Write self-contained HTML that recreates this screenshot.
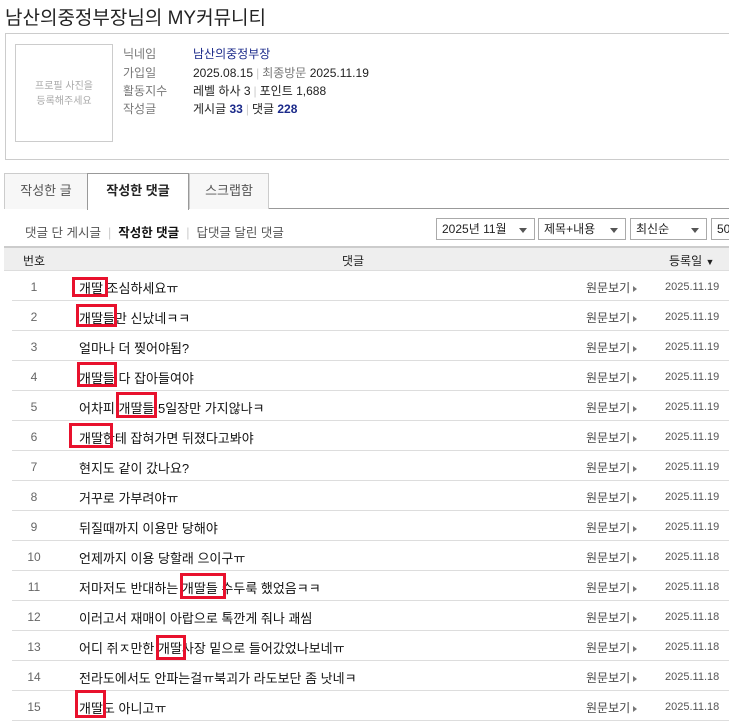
<!DOCTYPE html>
<html><head><meta charset="utf-8"><style>
*{margin:0;padding:0;box-sizing:border-box}
body{width:729px;height:720px;overflow:hidden;background:#fff;font-family:"Liberation Sans","Noto Sans CJK KR",sans-serif;font-size:12px;color:#222;position:relative}
.a{position:absolute;white-space:nowrap}
.title{left:5px;top:3px;font-size:19px;color:#222}
.prof{left:5px;top:33px;width:740px;height:127px;border:1px solid #ccc}
.photo{left:15px;top:44px;width:98px;height:98px;border:1px solid #ccc;color:#aaa;font-size:10px;text-align:center;line-height:15px;padding-top:34px}
.lab{color:#777;left:123px}
.val{left:193px;color:#222}
.sep{color:#ccc;margin:0 3px}
.b{color:#1b2a8a;font-weight:bold}
.tab{top:173px;height:36px;border:1px solid #ccc;border-bottom:none;background:#f7f7f7;color:#555;font-size:13px;text-align:center;line-height:34px}
.sel{top:218px;height:22px;border:1px solid #aaa;padding-left:5px;line-height:20px;font-size:12px;color:#222}
.sel:after{content:"";position:absolute;right:7px;top:9px;border:4px solid transparent;border-top:5px solid #555}
.hdr{left:4px;top:246px;width:725px;height:25px;background:#eee;border-top:2px solid #ccc;border-bottom:1px solid #ddd}
.row{left:12px;width:717px;height:30px;border-bottom:1px solid #ddd}
.n{left:0;width:44px;text-align:center;color:#666;top:9px}
.t{left:67px;top:7px;font-size:13px;color:#111}
.v{left:574px;top:8px;color:#444}
.v:after{content:"";display:inline-block;margin-left:3px;border:3px solid transparent;border-left:4px solid #777;vertical-align:middle}
.d{left:653px;top:10px;color:#555;font-size:11px}
.r{position:absolute;border:3px solid #e8112d}
</style></head><body>
<div class="a title">남산의중정부장님의 MY커뮤니티</div>
<div class="a prof"></div>
<div class="a photo">프로필 사진을<br>등록해주세요</div>
<div class="a lab" style="top:45px">닉네임</div><div class="a val" style="top:45px;color:#1b2a8a">남산의중정부장</div>
<div class="a lab" style="top:64px">가입일</div><div class="a val" style="top:64px">2025.08.15<span class="sep">|</span><span style="color:#777">최종방문</span> 2025.11.19</div>
<div class="a lab" style="top:82px">활동지수</div><div class="a val" style="top:82px">레벨 하사 3<span class="sep">|</span>포인트 1,688</div>
<div class="a lab" style="top:100px">작성글</div><div class="a val" style="top:100px">게시글 <span class="b">33</span><span class="sep">|</span>댓글 <span class="b">228</span></div>
<div class="a" style="left:4px;top:208px;width:725px;border-top:1px solid #999"></div>
<div class="a tab" style="left:4px;width:84px">작성한 글</div>
<div class="a tab" style="left:87px;width:102px;background:#fff;border-color:#999;height:37px;color:#222;font-weight:bold">작성한 댓글</div>
<div class="a tab" style="left:189px;width:80px">스크랩함</div>
<div class="a" style="left:25px;top:222px;font-size:12.5px;color:#555">댓글 단 게시글<span class="sep" style="margin:0 7px">|</span><b style="color:#111">작성한 댓글</b><span class="sep" style="margin:0 7px">|</span>답댓글 달린 댓글</div>
<div class="a sel" style="left:436px;width:99px">2025년 11월</div>
<div class="a sel" style="left:538px;width:88px">제목+내용</div>
<div class="a sel" style="left:630px;width:77px">최신순</div>
<div class="a sel" style="left:711px;width:40px">50</div>
<div class="a hdr"><span class="a" style="left:19px;top:4px">번호</span><span class="a" style="left:338px;top:4px">댓글</span><span class="a" style="left:665px;top:4px">등록일 <span style="font-size:9px">▼</span></span></div>
<div class="a row" style="top:271px"><span class="a n">1</span><span class="a t">개딸 조심하세요ㅠ</span><span class="a v">원문보기</span><span class="a d">2025.11.19</span></div>
<div class="a row" style="top:301px"><span class="a n">2</span><span class="a t">개딸들만 신났네ㅋㅋ</span><span class="a v">원문보기</span><span class="a d">2025.11.19</span></div>
<div class="a row" style="top:331px"><span class="a n">3</span><span class="a t">얼마나 더 찢어야됨?</span><span class="a v">원문보기</span><span class="a d">2025.11.19</span></div>
<div class="a row" style="top:361px"><span class="a n">4</span><span class="a t">개딸들 다 잡아들여야</span><span class="a v">원문보기</span><span class="a d">2025.11.19</span></div>
<div class="a row" style="top:391px"><span class="a n">5</span><span class="a t">어차피 개딸들 5일장만 가지않나ㅋ</span><span class="a v">원문보기</span><span class="a d">2025.11.19</span></div>
<div class="a row" style="top:421px"><span class="a n">6</span><span class="a t">개딸한테 잡혀가면 뒤졌다고봐야</span><span class="a v">원문보기</span><span class="a d">2025.11.19</span></div>
<div class="a row" style="top:451px"><span class="a n">7</span><span class="a t">현지도 같이 갔나요?</span><span class="a v">원문보기</span><span class="a d">2025.11.19</span></div>
<div class="a row" style="top:481px"><span class="a n">8</span><span class="a t">거꾸로 가부려야ㅠ</span><span class="a v">원문보기</span><span class="a d">2025.11.19</span></div>
<div class="a row" style="top:511px"><span class="a n">9</span><span class="a t">뒤질때까지 이용만 당해야</span><span class="a v">원문보기</span><span class="a d">2025.11.19</span></div>
<div class="a row" style="top:541px"><span class="a n">10</span><span class="a t">언제까지 이용 당할래 으이구ㅠ</span><span class="a v">원문보기</span><span class="a d">2025.11.18</span></div>
<div class="a row" style="top:571px"><span class="a n">11</span><span class="a t">저마저도 반대하는 개딸들 수두룩 했었음ㅋㅋ</span><span class="a v">원문보기</span><span class="a d">2025.11.18</span></div>
<div class="a row" style="top:601px"><span class="a n">12</span><span class="a t">이러고서 재매이 아랍으로 톡깐게 줘나 괘씸</span><span class="a v">원문보기</span><span class="a d">2025.11.18</span></div>
<div class="a row" style="top:631px"><span class="a n">13</span><span class="a t">어디 쥐ㅈ만한 개딸사장 밑으로 들어갔었나보네ㅠ</span><span class="a v">원문보기</span><span class="a d">2025.11.18</span></div>
<div class="a row" style="top:661px"><span class="a n">14</span><span class="a t">전라도에서도 안파는걸ㅠ북괴가 라도보단 좀 낫네ㅋ</span><span class="a v">원문보기</span><span class="a d">2025.11.18</span></div>
<div class="a row" style="top:691px"><span class="a n">15</span><span class="a t">개딸도 아니고ㅠ</span><span class="a v">원문보기</span><span class="a d">2025.11.18</span></div>
<div class="r" style="left:72px;top:277px;width:36px;height:20px"></div>
<div class="r" style="left:76px;top:304px;width:41px;height:23px"></div>
<div class="r" style="left:77px;top:362px;width:40px;height:25px"></div>
<div class="r" style="left:116px;top:392px;width:41px;height:26px"></div>
<div class="r" style="left:69px;top:423px;width:44px;height:25px"></div>
<div class="r" style="left:180px;top:573px;width:46px;height:26px"></div>
<div class="r" style="left:156px;top:635px;width:30px;height:25px"></div>
<div class="r" style="left:75px;top:690px;width:31px;height:28px"></div>
</body></html>
